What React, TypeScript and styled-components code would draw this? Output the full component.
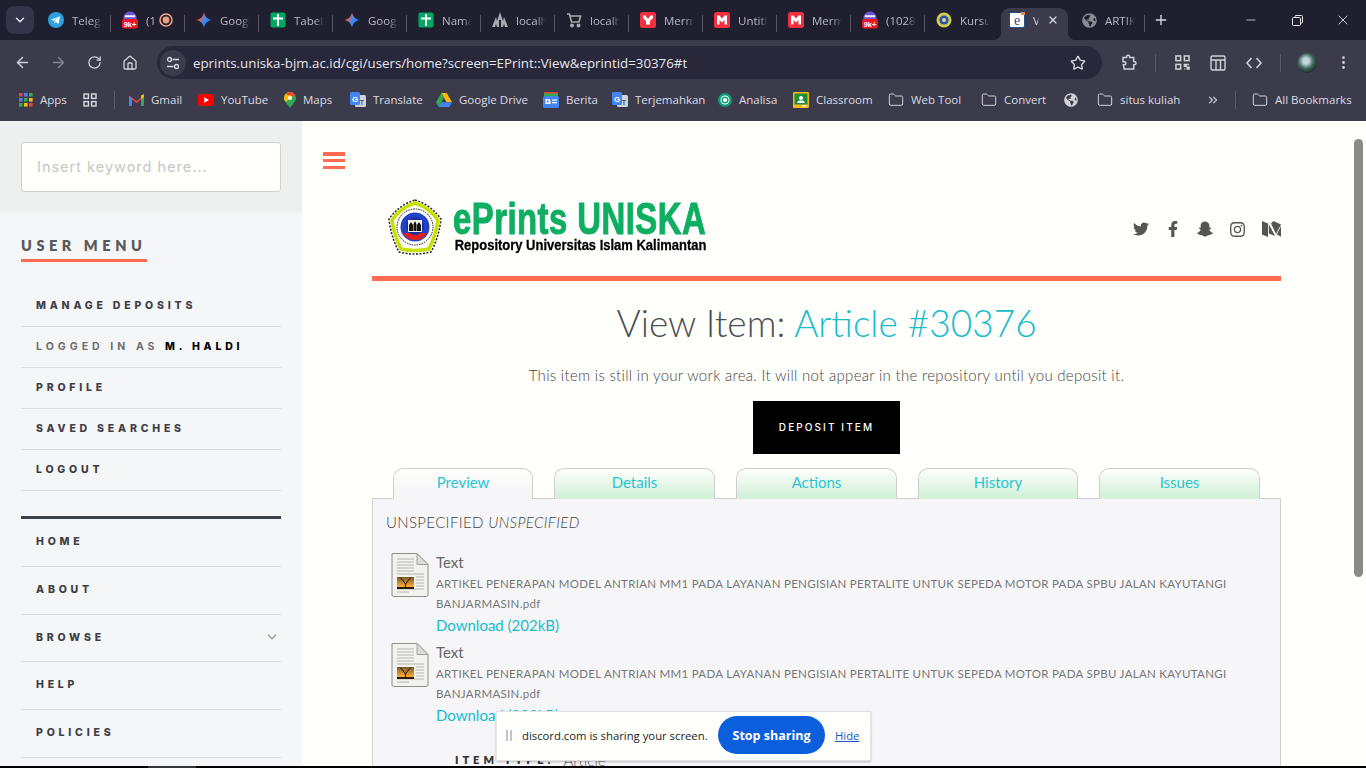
import React from "react";
import styled, { createGlobalStyle } from "styled-components";
import { ArrowLeft, ArrowRight, RotateCw, Home, Star, Folder, ChevronDown, ChevronsRight, X, Plus, Minus, MoreVertical } from "lucide-react";
import { FaTwitter, FaFacebookF, FaSnapchatGhost, FaInstagram, FaGlobeAmericas } from "react-icons/fa";

const GlobalStyle = createGlobalStyle`
  html, body { margin: 0; padding: 0; height: 100%; overflow: hidden; background: #000; }
  * { box-sizing: border-box; }
`;

const Screen = styled.div`
  width: 1366px;
  height: 768px;
  display: flex;
  flex-direction: column;
  overflow: hidden;
  position: relative;
  font-family: Lato, "Liberation Sans", sans-serif;
`;

/* browser chrome */
const TabStrip = styled.div`
  height: 40px;
  flex: none;
  background: #1f1f2f;
  display: flex;
  align-items: flex-end;
  padding-left: 6px;
  font-family: "Open Sans", "Noto Sans", sans-serif;
`;
const TabSearch = styled.div`
  width: 28px;
  height: 28px;
  margin: 0 3px 6px 0;
  border-radius: 8px;
  background: #34344a;
  color: #e6e6ee;
  display: flex;
  align-items: center;
  justify-content: center;
`;
const BrowserTab = styled.div<{ $w?: number; $plain?: boolean }>`
  width: ${(p) => p.$w ?? 74}px;
  height: 32px;
  display: flex;
  align-items: center;
  padding: 0 0 8px 11px;
  position: relative;
  color: #b9b9c4;
  font-size: 11.5px;
  white-space: nowrap;
  overflow: hidden;
  &::after {
    content: "";
    display: ${(p) => (p.$plain ? "none" : "block")};
    position: absolute;
    right: 0;
    top: 7px;
    width: 1px;
    height: 17px;
    background: #55556a;
  }
`;
const ActiveTab = styled.div`
  width: 67px;
  height: 32px;
  margin: 0 2px 0 2px;
  background: #3b3b4b;
  border-radius: 9px 9px 0 0;
  display: flex;
  align-items: center;
  padding: 0 0 8px 8px;
  color: #d8d8e2;
  font-size: 11.5px;
  gap: 8px;
  position: relative;
  &::before, &::after {
    content: "";
    position: absolute;
    bottom: 0;
    width: 8px;
    height: 8px;
  }
  &::before { left: -8px; background: radial-gradient(circle at 0 0, transparent 8px, #3b3b4b 8.5px); }
  &::after { right: -8px; background: radial-gradient(circle at 100% 0, transparent 8px, #3b3b4b 8.5px); }
`;
const Favicon = styled.span`
  width: 16px;
  height: 16px;
  flex: none;
  margin-right: 8px;
  display: flex;
  align-items: center;
  justify-content: center;
`;
const TabLabel = styled.span<{ $w?: number }>`
  width: ${(p) => p.$w ?? 30}px;
  overflow: hidden;
  -webkit-mask-image: linear-gradient(90deg, #000 70%, transparent);
  mask-image: linear-gradient(90deg, #000 70%, transparent);
`;
const PlusButton = styled.div`
  width: 32px;
  height: 32px;
  padding-bottom: 8px;
  color: #d8d8e2;
  display: flex;
  align-items: center;
  justify-content: center;
`;
const WindowControls = styled.div`
  margin-left: auto;
  height: 40px;
  display: flex;
  color: #e8e8ee;
`;
const WindowButton = styled.div`
  width: 46px;
  display: flex;
  align-items: center;
  justify-content: center;
`;

const Toolbar = styled.div`
  height: 40px;
  flex: none;
  background: #3b3b4b;
  display: flex;
  align-items: center;
  padding: 5px 0 0 4px;
  color: #d2d2da;
  font-family: "Open Sans", "Noto Sans", sans-serif;
`;
const NavButton = styled.div<{ $dim?: boolean }>`
  width: 36px;
  height: 32px;
  flex: none;
  display: flex;
  align-items: center;
  justify-content: center;
  color: ${(p) => (p.$dim ? "#85858f" : "#d2d2da")};
`;
const UrlBar = styled.div`
  width: 945px;
  height: 33px;
  margin: 0 9px 0 9px;
  background: #28283a;
  border-radius: 17px;
  display: flex;
  align-items: center;
  padding: 0 16px 0 3px;
  flex: none;
`;
const SiteInfo = styled.div`
  width: 26px;
  height: 26px;
  border-radius: 50%;
  background: #3b3b4b;
  margin-right: 7px;
  display: flex;
  align-items: center;
  justify-content: center;
`;
const UrlText = styled.span`
  font-size: 13.3px;
  color: #e6e6ee;
  flex: 1;
`;
const ToolSep = styled.div`
  width: 1px;
  height: 18px;
  background: #5a5a6c;
  flex: none;
`;
const ToolDivider = styled(ToolSep)`
  margin: 0 8px;
`;
const ToolIcons = styled.div`
  display: flex;
  align-items: center;
  flex: 1;
`;
const Avatar = styled.div`
  width: 20px;
  height: 20px;
  border-radius: 50%;
  background: radial-gradient(circle at 45% 40%, #c4d6dc 0 18%, #3f6a5d 45%, #1e2a26 75%);
`;

const Bookmarks = styled.div`
  height: 41px;
  flex: none;
  background: #3b3b4b;
  display: flex;
  align-items: center;
  padding: 0 0 2px 19px;
  color: #dcdce4;
  font-size: 11.5px;
  font-family: "Open Sans", "Noto Sans", sans-serif;
`;
const Bookmark = styled.div<{ $w: number }>`
  width: ${(p) => p.$w}px;
  flex: none;
  display: flex;
  align-items: center;
  gap: 7px;
  white-space: nowrap;
  & > svg { flex: none; }
`;

/* page */
const PageArea = styled.div`
  flex: 1;
  min-height: 0;
  display: flex;
  background: #fffffc;
  overflow: hidden;
`;
const Sidebar = styled.aside`
  width: 302px;
  flex: none;
  background: #f5f6f8;
`;
const SearchBlock = styled.div`
  height: 92px;
  padding: 21px;
  background: #eef0f0;
`;
const SearchInput = styled.div`
  height: 50px;
  border: 1px solid #cfd2d2;
  border-radius: 3px;
  background: #fffffc;
  padding: 0 0 1px 15px;
  display: flex;
  align-items: center;
  font-family: Inter, sans-serif;
  font-size: 14.5px;
  letter-spacing: 1px;
  color: #c6c6c6;
`;
const SideBody = styled.div`
  padding: 22px 21px 0;
`;
const MenuTitle = styled.div`
  display: inline-block;
  font-size: 14.5px;
  font-weight: 800;
  letter-spacing: 4.55px;
  line-height: 20px;
  color: #5a5a5a;
  padding-bottom: 3px;
  width: 126px;
  white-space: nowrap;
  border-bottom: 3px solid #ff6a50;
`;
const UserMenu = styled.div`
  margin-top: 24px;
  padding-bottom: 25px;
`;
const SideRow = styled.div<{ $h: number }>`
  height: ${(p) => p.$h}px;
  padding: 0 0 2px 15px;
  border-bottom: 1px solid #dcdfdf;
  display: flex;
  align-items: center;
  justify-content: space-between;
  font-family: Inter, sans-serif;
  font-size: 10.5px;
  font-weight: 800;
  letter-spacing: 3.8px;
  color: #3e3e48;
  white-space: nowrap;
`;
const Muted = styled.span`
  color: #6e6e70;
  font-weight: 700;
  letter-spacing: 4.05px;
`;
const Strong = styled.strong`
  color: #000;
  font-weight: 800;
`;
const MainMenu = styled.div`
  border-top: 3px solid #3a4149;
`;
const DownIcon = styled.span`
  color: #a3a6ab;
  display: flex;
  margin-right: 2px;
`;

const Main = styled.main`
  flex: 1;
  min-width: 0;
`;
const Burger = styled.div`
  margin: 31px 0 0 21px;
  width: 22px;
  height: 17px;
  display: flex;
  flex-direction: column;
  justify-content: space-between;
  span {
    height: 3.5px;
    background: #ff6a50;
  }
`;
const Content = styled.div`
  margin: 30px 0 0 70px;
  width: 909px;
`;
const SiteHeader = styled.header`
  height: 82px;
  display: flex;
  justify-content: space-between;
  padding: 0 0 21px 15px;
  border-bottom: 5px solid #ff6a50;
`;
const Logo = styled.div`
  display: flex;
  gap: 10px;
`;
const LogoText = styled.div`
  padding-top: 2px;
  width: 256px;
`;
const LogoTitle = styled.div`
  font-family: "Liberation Sans", sans-serif;
  font-weight: 700;
  font-size: 44px;
  line-height: 36px;
  color: #0fae63;
  white-space: nowrap;
  transform: scale(0.748, 1);
  transform-origin: 0 50%;
  width: 345px;
  letter-spacing: 0.6px;
  -webkit-text-stroke: 1px #0fae63;
`;
const LogoSub = styled.div`
  font-family: "Liberation Sans", sans-serif;
  font-weight: 700;
  font-size: 15px;
  line-height: 16px;
  color: #000;
  white-space: nowrap;
  padding-left: 2px;
  transform: scale(0.865, 1);
  transform-origin: 0 50%;
  width: 300px;
  -webkit-text-stroke: 0.3px #000;
`;
const Socials = styled.div`
  display: flex;
  align-items: center;
  gap: 16px;
  padding-top: 4px;
  color: #555;
`;
const Heading = styled.h1`
  margin: 20px 0 0;
  text-align: center;
  font-weight: 300;
  font-size: 37px;
  line-height: 44px;
  color: #4a4f54;
  span { color: #17bccc; }
`;
const Note = styled.p`
  margin: 20px 0 0;
  text-align: center;
  font-size: 15px;
  line-height: 20px;
  font-weight: 300;
  letter-spacing: 0.3px;
  color: #444;
`;
const DepositButton = styled.div`
  margin: 16px auto 0;
  width: 147px;
  height: 53px;
  padding-bottom: 2px;
  background: #000;
  color: #fff;
  display: flex;
  align-items: center;
  justify-content: center;
  font-family: Inter, sans-serif;
  font-size: 10px;
  font-weight: 500;
  letter-spacing: 2.1px;
`;
const Tabs = styled.div`
  margin-top: 14px;
  padding-left: 21px;
  display: flex;
  gap: 21px;
  height: 30px;
`;
const PageTab = styled.div<{ $w: number; $active?: boolean }>`
  width: ${(p) => p.$w}px;
  height: 31px;
  position: relative;
  border: 1px solid #cfcfcf;
  border-bottom: none;
  border-radius: 10px 10px 0 0;
  background: linear-gradient(180deg, #fffffc, ${(p) => (p.$active ? "#f6f6f8" : "#d3f0da")} ${(p) => (p.$active ? "70%" : "90%")});
  color: #2cc4d2;
  font-size: 15px;
  font-weight: 400;
  display: flex;
  justify-content: center;
  padding-top: 3px;
  line-height: 20px;
`;
const Panel = styled.section`
  border: 1px solid #cfcfcf;
  background: #f6f6f8;
  padding: 13px 13px 0;
  height: 400px;
  color: #555;
`;
const Unspecified = styled.div`
  font-size: 15px;
  line-height: 20px;
  font-weight: 300;
  letter-spacing: 0.35px;
  color: #444;
`;
const FileRow = styled.div`
  margin-top: 20px;
  padding: 0 0 7px 5px;
  display: flex;
  & + & { margin-top: 0; }
`;
const FileThumb = styled.div`
  width: 45px;
  flex: none;
`;
const FileInfo = styled.div`
  flex: 1;
`;
const FileKind = styled.div`
  font-size: 15px;
  line-height: 20px;
  font-weight: 400;
  color: #666;
`;
const FileName = styled.div`
  margin-top: 2px;
  font-size: 11.5px;
  line-height: 20px;
  letter-spacing: 0.3px;
  color: #777;
`;
const Download = styled.div`
  margin-top: 1px;
  font-size: 15px;
  line-height: 20px;
  color: #17bccc;
`;
const MetaRow = styled.div`
  margin-top: 18px;
  padding-left: 69px;
  display: flex;
  align-items: center;
  gap: 9px;
  line-height: 20px;
`;
const MetaLabel = styled.span`
  font-size: 11px;
  font-weight: 800;
  letter-spacing: 4px;
  color: #333;
`;
const MetaValue = styled.span`
  font-size: 15px;
  font-weight: 300;
`;

/* overlays */
const ScrollThumb = styled.div`
  position: absolute;
  left: 1354px;
  top: 139px;
  width: 9px;
  height: 438px;
  border-radius: 5px;
  background: #8a8a88;
`;
const ShareBar = styled.div`
  position: absolute;
  left: 496px;
  top: 711px;
  width: 375px;
  height: 50px;
  padding: 0 0 2px 9px;
  background: #fffffc;
  border: 1px solid #e3e3e3;
  box-shadow: 0 1px 2px rgba(0, 0, 0, 0.25);
  display: flex;
  align-items: center;
  font-family: "Open Sans", "Noto Sans", sans-serif;
  font-size: 11.3px;
  color: #222;
`;
const Grip = styled.div`
  width: 6px;
  height: 11px;
  border-left: 2px solid #c4c4c4;
  border-right: 2px solid #c4c4c4;
  margin-right: 10px;
`;
const ShareText = styled.span`
  width: 185px;
  white-space: nowrap;
`;
const StopButton = styled.div`
  width: 107px;
  height: 38px;
  margin: 0 10px 0 11px;
  border-radius: 19px;
  background: #0b5fdc;
  color: #fff;
  font-size: 12.5px;
  font-weight: 700;
  display: flex;
  align-items: center;
  justify-content: center;
`;
const HideLink = styled.span`
  color: #1a56cc;
  text-decoration: underline;
`;
const BottomEdge = styled.div`
  height: 2px;
  flex: none;
  background: linear-gradient(90deg, #000 148px, #333 148px, #333 196px, #000 196px);
`;

/* drawings */
const Telegram = () => (
  <svg width="16" height="16" viewBox="0 0 16 16">
    <circle cx="8" cy="8" r="8" fill="#2aa3e0" />
    <path d="M3 7.800 12 4.200 10.600 12 7.800 10 6.500 11.400 6.200 9.200 10.400 5.800 5.200 8.800z" fill="#fff" />
  </svg>
);
const Sheet = ({ color }: { color: string }) => (
  <svg width="16" height="16" viewBox="0 0 16 16">
    <rect x="0.5" y="0.5" width="15" height="15" rx="2" fill={color} />
    <path d="M7 2h2v3.500h4v2H9V14H7V7.500H3v-2h4z" fill="#fff" />
  </svg>
);
const Gemini = () => (
  <svg width="16" height="16" viewBox="0 0 16 16">
    <defs>
      <linearGradient id="gem" x1="0" y1="0" x2="1" y2="0.6">
        <stop offset="0" stopColor="#f5b400" />
        <stop offset="0.35" stopColor="#ea5a3c" />
        <stop offset="0.6" stopColor="#3f8cf3" />
        <stop offset="1" stopColor="#2a6ff0" />
      </linearGradient>
    </defs>
    <path d="M8 0c.6 4.400 3.400 7.400 8 8-4.600.6-7.400 3.600-8 8-.6-4.400-3.400-7.400-8-8 4.600-.6 7.400-3.600 8-8z" fill="url(#gem)" />
  </svg>
);
const Badge = () => (
  <svg width="17" height="18" viewBox="0 0 17 18">
    <circle cx="8.500" cy="7" r="7" fill="#6a55d8" />
    <rect x="3" y="4" width="11" height="2" fill="#fff" />
    <rect x="0" y="8" width="17" height="10" rx="2" fill="#f0141e" />
    <text x="8.500" y="16" textAnchor="middle" fontSize="8" fontWeight="700" fill="#fff" fontFamily="Liberation Sans">9k+</text>
  </svg>
);
const Ring = () => (
  <svg width="14" height="14" viewBox="0 0 14 14">
    <circle cx="7" cy="7" r="6" fill="none" stroke="#f5a58c" strokeWidth="1.500" />
    <circle cx="7" cy="7" r="3.400" fill="#f0a080" />
  </svg>
);
const Tower = () => (
  <svg width="16" height="16" viewBox="0 0 16 16" fill="#a9a9b0">
    <path d="M0 15 4 5l1 4 3-9 3 9 1-4 4 10h-3l-1-3-1 3H9V8H7v7H5l-1-3-1 3z" />
  </svg>
);
const Cart = () => (
  <svg width="16" height="16" viewBox="0 0 16 16" fill="none" stroke="#a9a9b0" strokeWidth="1.600">
    <path d="M1 2h2.500l2 8h7.500l1.500-6H4.200" />
    <circle cx="6" cy="13.500" r="1.200" fill="#a9a9b0" />
    <circle cx="12.500" cy="13.500" r="1.200" fill="#a9a9b0" />
  </svg>
);
const Maker = ({ wide }: { wide?: boolean }) => (
  <svg width="16" height="16" viewBox="0 0 16 16">
    <rect width="16" height="16" rx="2.500" fill="#f0303f" />
    {wide ? (
      <path d="M3 3.500h2.500L8 6.500l2.500-3H13v9h-2.500V8L8 10.500 5.500 8v4.500H3z" fill="#fff" />
    ) : (
      <path d="M3 3.500h2.400L8 7l2.600-3.500H13V6l-3 3v3.500H6V9L3 6z" fill="#fff" />
    )}
  </svg>
);
const SealSmall = () => (
  <svg width="16" height="16" viewBox="0 0 16 16">
    <circle cx="8" cy="8" r="7.500" fill="#c8d050" />
    <circle cx="8" cy="8" r="4.600" fill="#3050a8" />
    <circle cx="8" cy="8" r="2" fill="#d8d8b0" />
  </svg>
);
const EprintsFav = () => (
  <svg width="16" height="16" viewBox="0 0 16 16">
    <rect x="0.5" y="0.5" width="15" height="15" rx="1.500" fill="#fff" stroke="#1d4f8c" />
    <text x="8" y="13" textAnchor="middle" fontSize="14" fontFamily="Liberation Serif" fill="#1d4f8c">e</text>
    <rect x="12" y="0" width="4" height="3" fill="#f08a30" />
  </svg>
);
const Restore = () => (
  <svg width="11" height="11" viewBox="0 0 11 11" fill="none" stroke="currentColor">
    <rect x="0.5" y="2.500" width="8" height="8" rx="1" />
    <path d="M3 2.500V1.500a1 1 0 0 1 1-1h5.500a1 1 0 0 1 1 1V7a1 1 0 0 1-1 1h-1" />
  </svg>
);
const Tune = () => (
  <svg width="14" height="14" viewBox="0 0 14 14" fill="none" stroke="#d8d8e0" strokeWidth="1.300">
    <circle cx="3.500" cy="3.500" r="2" />
    <path d="M6.500 3.500H13M1 10.500h6.500" />
    <circle cx="10.500" cy="10.500" r="2" />
  </svg>
);
const Extension = () => (
  <svg width="18" height="18" viewBox="0 0 18 18" fill="none" stroke="#d2d2da" strokeWidth="1.500">
    <path d="M3 3.500h3.500V2.800a1.600 1.600 0 0 1 3.200 0v.7h4v4h.7a1.600 1.600 0 0 1 0 3.200h-.7V15H4.200l-.8-4.200h1a1.500 1.500 0 0 0 0-3H3z" />
  </svg>
);
const QrIcon = () => (
  <svg width="15" height="15" viewBox="0 0 16 16" fill="none" stroke="#d2d2da" strokeWidth="1.600">
    <rect x="1" y="1" width="5" height="5" />
    <rect x="10" y="1" width="5" height="5" />
    <rect x="1" y="10" width="5" height="5" />
    <path d="M10 10h2v2h-2zM13 13h2v2h-2zM13 10h2M10 15h1" />
  </svg>
);
const Layout = () => (
  <svg width="16" height="16" viewBox="0 0 16 16" fill="none" stroke="#d2d2da" strokeWidth="1.400">
    <rect x="1" y="1" width="14" height="14" rx="1.500" />
    <path d="M1 5h14M6 5v10M10.500 5v10" />
  </svg>
);
const CodeIcon = () => (
  <svg width="16" height="12" viewBox="0 0 16 12" fill="none" stroke="#d2d2da" strokeWidth="1.600">
    <path d="M5.500 1 1 6l4.500 5M10.500 1 15 6l-4.500 5" />
  </svg>
);
const AppsGrid = () => (
  <svg width="14" height="14" viewBox="0 0 14 14">
    {[0, 5, 10].map((y, r) =>
      [0, 5, 10].map((x, c) => (
        <rect key={`${r}${c}`} x={x} y={y} width="3.600" height="3.600" fill={["#ea4335", "#4285f4", "#34a853", "#fbbc05"][(r + c) % 4]} />
      ))
    )}
  </svg>
);
const Squares = () => (
  <svg width="14" height="14" viewBox="0 0 14 14" fill="none" stroke="#dcdce4" strokeWidth="1.400">
    <rect x="1" y="1" width="4.400" height="4.400" />
    <rect x="8.600" y="1" width="4.400" height="4.400" />
    <rect x="1" y="8.600" width="4.400" height="4.400" />
    <rect x="8.600" y="8.600" width="4.400" height="4.400" />
  </svg>
);
const Gmail = () => (
  <svg width="15" height="12" viewBox="0 0 15 12">
    <path d="M0 1.500 7.500 7 15 1.500V12h-3V5.500L7.500 9 3 5.500V12H0z" fill="#ea4335" />
    <path d="M0 2v10h3V4z" fill="#4285f4" />
    <path d="M15 2v10h-3V4z" fill="#34a853" />
    <path d="M12 1.500 15 0v3l-3 2.200z" fill="#fbbc05" />
  </svg>
);
const Youtube = () => (
  <svg width="16" height="12" viewBox="0 0 16 12">
    <rect width="16" height="12" rx="3" fill="#f00" />
    <path d="M6.300 3.200 11 6l-4.700 2.800z" fill="#fff" />
  </svg>
);
const MapsPin = () => (
  <svg width="12" height="16" viewBox="0 0 12 16">
    <path d="M6 0a6 6 0 0 1 6 6c0 3.500-3.600 6-6 10C3.600 12 0 9.500 0 6a6 6 0 0 1 6-6z" fill="#34a853" />
    <path d="M6 0a6 6 0 0 1 5 2.700L1.500 10C.6 8.800 0 7.500 0 6a6 6 0 0 1 6-6z" fill="#fbbc05" />
    <path d="M6 0a6 6 0 0 1 5 2.700L8.500 5A3 3 0 0 0 4 3.500L2 1.500A6 6 0 0 1 6 0z" fill="#ea4335" />
    <circle cx="6" cy="6" r="2" fill="#fff" />
  </svg>
);
const Translate = () => (
  <svg width="16" height="16" viewBox="0 0 16 16">
    <rect x="5" y="3" width="11" height="12" rx="1.500" fill="#cfd2d8" />
    <rect x="0" y="0" width="10" height="13" rx="1.500" fill="#4285f4" />
    <text x="5" y="9.500" textAnchor="middle" fontSize="8" fontWeight="700" fill="#fff" fontFamily="Liberation Sans">G</text>
    <text x="12" y="12.500" textAnchor="middle" fontSize="7" fontWeight="700" fill="#555" fontFamily="Liberation Sans">T</text>
  </svg>
);
const Drive = () => (
  <svg width="16" height="14" viewBox="0 0 16 14">
    <path d="M5.300 0h5.400L16 9.300h-5.400z" fill="#fbbc05" />
    <path d="M5.300 0 0 9.300 2.700 14l5.300-9.300z" fill="#34a853" />
    <path d="M2.700 14h10.600L16 9.300H5.400z" fill="#4285f4" />
  </svg>
);
const News = () => (
  <svg width="16" height="16" viewBox="0 0 16 16">
    <rect x="1" y="0" width="14" height="4" rx="1" fill="#ea4335" />
    <rect x="1" y="1.500" width="14" height="3" fill="#34a853" />
    <rect x="0" y="4" width="16" height="12" rx="1.500" fill="#4285f4" />
    <path d="M2.500 7h4.500v1.200H4v2.300h2v-1H5v-1h2.500V12h-5zM9 7.500h5v1.200H9zM9 10h5v1.200H9z" fill="#fff" />
  </svg>
);
const Analisa = () => (
  <svg width="14" height="14" viewBox="0 0 14 14">
    <circle cx="7" cy="7" r="7" fill="#0f9d78" />
    <circle cx="7" cy="7" r="4.500" fill="#fff" />
    <circle cx="7" cy="7" r="2.800" fill="none" stroke="#0f9d78" strokeWidth="1.500" />
  </svg>
);
const Classroom = () => (
  <svg width="16" height="16" viewBox="0 0 16 16">
    <rect width="16" height="16" rx="1" fill="#f5bb12" />
    <rect x="1.500" y="1.500" width="13" height="11" fill="#1e8e3e" />
    <circle cx="8" cy="6" r="2" fill="#fff" />
    <path d="M4 11c.5-2 2-2.500 4-2.500s3.500.5 4 2.500z" fill="#fff" />
    <rect x="9" y="13.200" width="4.500" height="1.300" fill="#fff" />
  </svg>
);
const Seal = () => (
  <svg width="56" height="56" viewBox="0 0 56 56">
    <path d="M28 1Q44 6 54 20 52 38 44 53 28 57 12 53 4 38 2 20 12 6 28 1z" fill="#fffffc" stroke="#222" strokeWidth="1.500" strokeDasharray="2 1.500" />
    <path d="M28 4Q43 9 51 21 49 36 42 50 28 53 14 50 7 36 5 21 13 9 28 4z" fill="none" stroke="#c7e000" strokeWidth="3.500" />
    <circle cx="28" cy="28" r="18" fill="#fffffc" stroke="#111" strokeWidth="1" strokeDasharray="1.500 1" />
    <circle cx="28" cy="28" r="14.500" fill="#2340c8" />
    <path d="M16 34a13.500 13.500 0 0 0 24 0z" fill="#e02020" />
    <circle cx="28" cy="27" r="9" fill="#1a2f9a" />
    <rect x="21" y="21" width="14" height="12" fill="#f5f5f0" />
    <path d="M22 32v-6l2-3 2 3v6zM26.500 32v-7l1.500-3 1.500 3v7zM30 32v-6l2-3 2 3v6z" fill="#111" />
  </svg>
);
const MediumMark = () => (
  <svg width="19" height="16" viewBox="0 0 19 16" fill="#555">
    <path d="M0 0 6 2.600V16L0 13.500z" />
    <path d="M6.800 3 13 15l-6.200-2.600z" />
    <path d="M9 2.500 11.500 0 19 3.500 14 13z" />
    <path d="M14.800 13.500 19 5v10.800z" />
  </svg>
);
const DocThumb = () => (
  <svg width="38" height="46" viewBox="0 0 38 46">
    <defs>
      <linearGradient id="sun" x1="0" y1="0" x2="0" y2="1">
        <stop offset="0" stopColor="#7a5a2a" />
        <stop offset="0.7" stopColor="#f0a030" />
        <stop offset="1" stopColor="#f8d050" />
      </linearGradient>
    </defs>
    <path d="M1 1.500h25l11 11V43a1.500 1.500 0 0 1-1.500 1.500h-33A1.500 1.500 0 0 1 1 43z" fill="#f2f2ee" stroke="#8e8e8a" />
    <path d="M26 1.500V12.500h11z" fill="#dcdcd8" stroke="#a0a0a0" />
    <path d="M6 7h17M6 10h17M6 13h17M6 16h17M6 19h17M6 22h27M25 25h8M25 28h8M25 31h8M25 34h8M6 37h27M6 40h12" stroke="#b4b4b0" />
    <rect x="6" y="25" width="17" height="12" fill="url(#sun)" />
    <path d="M14.500 37v-5l-3-4M14.500 32l3-4M9 25.500l2.500 2.500M20 25.500 17.500 28" stroke="#111" fill="none" />
    <rect x="6" y="35" width="17" height="2" fill="#2a1a08" />
  </svg>
);

const topTabs: { icon: React.ReactNode; label: string }[] = [
  { icon: <Telegram />, label: "Telegram" },
  { icon: <Badge />, label: "(1" },
  { icon: <Gemini />, label: "Google" },
  { icon: <Sheet color="#00a862" />, label: "Tabel" },
  { icon: <Gemini />, label: "Google" },
  { icon: <Sheet color="#00a862" />, label: "Nama" },
  { icon: <Tower />, label: "localhost" },
  { icon: <Cart />, label: "localhost" },
  { icon: <Maker />, label: "Mermaid" },
  { icon: <Maker wide />, label: "Untitled" },
  { icon: <Maker wide />, label: "Mermaid" },
  { icon: <Badge />, label: "(1028" },
  { icon: <SealSmall />, label: "Kursus" },
];

const folder = <Folder size={16} strokeWidth={1.5} color="#d2d2da" />;
const marks: { w: number; icon: React.ReactNode; label?: string }[] = [
  { w: 64, icon: <AppsGrid />, label: "Apps" },
  { w: 31, icon: <Squares /> },
];
const marksAfter: { w: number; icon: React.ReactNode; label?: string }[] = [
  { w: 69, icon: <Gmail />, label: "Gmail" },
  { w: 86, icon: <Youtube />, label: "YouTube" },
  { w: 66, icon: <MapsPin />, label: "Maps" },
  { w: 86, icon: <Translate />, label: "Translate" },
  { w: 107, icon: <Drive />, label: "Google Drive" },
  { w: 69, icon: <News />, label: "Berita" },
  { w: 106, icon: <Translate />, label: "Terjemahkan" },
  { w: 75, icon: <Analisa />, label: "Analisa" },
  { w: 95, icon: <Classroom />, label: "Classroom" },
  { w: 93, icon: folder, label: "Web Tool" },
  { w: 83, icon: folder, label: "Convert" },
  { w: 33, icon: <FaGlobeAmericas size={14} color="#d2d2da" /> },
  { w: 109, icon: folder, label: "situs kuliah" },
];

const userRows = ["MANAGE DEPOSITS", "LOGGED", "PROFILE", "SAVED SEARCHES", "LOGOUT"];
const mainRows = ["HOME", "ABOUT", "BROWSE", "HELP", "POLICIES"];
const pageTabs = [
  { label: "Preview", w: 140, active: true },
  { label: "Details", w: 161 },
  { label: "Actions", w: 161 },
  { label: "History", w: 160 },
  { label: "Issues", w: 161 },
];

const FileEntry = () => (
  <FileRow>
    <FileThumb>
      <DocThumb />
    </FileThumb>
    <FileInfo>
      <FileKind>Text</FileKind>
      <FileName>
        ARTIKEL PENERAPAN MODEL ANTRIAN MM1 PADA LAYANAN PENGISIAN PERTALITE UNTUK SEPEDA MOTOR PADA SPBU JALAN KAYUTANGI
        <br />
        BANJARMASIN.pdf
      </FileName>
      <Download>Download (202kB)</Download>
    </FileInfo>
  </FileRow>
);

export default function App() {
  return (
    <Screen>
      <GlobalStyle />
      <TabStrip>
        <TabSearch>
          <ChevronDown size={14} strokeWidth={2.5} />
        </TabSearch>
        {topTabs.map((t, i) => (
          <BrowserTab key={i} $plain={i === 12}>
            <Favicon>{t.icon}</Favicon>
            {i === 1 ? (
              <>
                <TabLabel $w={13}>{t.label}</TabLabel>
                <Ring />
              </>
            ) : (
              <TabLabel>{t.label}</TabLabel>
            )}
          </BrowserTab>
        ))}
        <ActiveTab>
          <EprintsFav />
          <TabLabel $w={6}>V</TabLabel>
          <X size={12} strokeWidth={2.5} />
        </ActiveTab>
        <BrowserTab $w={75}>
          <Favicon>
            <FaGlobeAmericas size={15} color="#8a8a94" />
          </Favicon>
          <TabLabel>ARTIKEL</TabLabel>
        </BrowserTab>
        <PlusButton>
          <Plus size={16} strokeWidth={2} />
        </PlusButton>
        <WindowControls>
          <WindowButton>
            <Minus size={14} strokeWidth={1.3} />
          </WindowButton>
          <WindowButton>
            <Restore />
          </WindowButton>
          <WindowButton>
            <X size={16} strokeWidth={1.3} />
          </WindowButton>
        </WindowControls>
      </TabStrip>

      <Toolbar>
        <NavButton>
          <ArrowLeft size={17} />
        </NavButton>
        <NavButton $dim>
          <ArrowRight size={17} />
        </NavButton>
        <NavButton>
          <RotateCw size={15} />
        </NavButton>
        <NavButton>
          <Home size={16} />
        </NavButton>
        <UrlBar>
          <SiteInfo>
            <Tune />
          </SiteInfo>
          <UrlText>eprints.uniska-bjm.ac.id/cgi/users/home?screen=EPrint::View&amp;eprintid=30376#t</UrlText>
          <Star size={16} color="#d8d8e0" />
        </UrlBar>
        <ToolIcons>
          <NavButton>
            <Extension />
          </NavButton>
          <ToolDivider />
          <NavButton>
            <QrIcon />
          </NavButton>
          <NavButton>
            <Layout />
          </NavButton>
          <NavButton>
            <CodeIcon />
          </NavButton>
          <ToolDivider />
          <NavButton>
            <Avatar />
          </NavButton>
          <NavButton>
            <MoreVertical size={17} />
          </NavButton>
        </ToolIcons>
      </Toolbar>

      <Bookmarks>
        {marks.map((m, i) => (
          <Bookmark key={i} $w={m.w}>
            {m.icon}
            {m.label}
          </Bookmark>
        ))}
        <Bookmark $w={15}>
          <ToolSep />
        </Bookmark>
        {marksAfter.map((m, i) => (
          <Bookmark key={i} $w={m.w}>
            {m.icon}
            {m.label}
          </Bookmark>
        ))}
        <Bookmark $w={29}>
          <ChevronsRight size={14} color="#d2d2da" />
        </Bookmark>
        <Bookmark $w={17}>
          <ToolSep />
        </Bookmark>
        <Bookmark $w={100}>
          {folder}
          All Bookmarks
        </Bookmark>
      </Bookmarks>

      <PageArea>
        <Sidebar>
          <SearchBlock>
            <SearchInput>Insert keyword here...</SearchInput>
          </SearchBlock>
          <SideBody>
            <MenuTitle>USER MENU</MenuTitle>
            <UserMenu>
              {userRows.map((r) => (
                <SideRow key={r} $h={41}>
                  {r === "LOGGED" ? (
                    <span>
                      <Muted>LOGGED IN AS </Muted>
                      <Strong>M. HALDI</Strong>
                    </span>
                  ) : (
                    r
                  )}
                </SideRow>
              ))}
            </UserMenu>
            <MainMenu>
              {mainRows.map((r) => (
                <SideRow key={r} $h={r === "BROWSE" ? 47 : 48}>
                  {r}
                  {r === "BROWSE" && (
                    <DownIcon>
                      <ChevronDown size={14} strokeWidth={3} />
                    </DownIcon>
                  )}
                </SideRow>
              ))}
            </MainMenu>
          </SideBody>
        </Sidebar>

        <Main>
          <Burger>
            <span />
            <span />
            <span />
          </Burger>
          <Content>
            <SiteHeader>
              <Logo>
                <Seal />
                <LogoText>
                  <LogoTitle>ePrints UNISKA</LogoTitle>
                  <LogoSub>Repository Universitas Islam Kalimantan</LogoSub>
                </LogoText>
              </Logo>
              <Socials>
                <FaTwitter size={16} />
                <FaFacebookF size={16} />
                <FaSnapchatGhost size={16} />
                <FaInstagram size={17} />
                <MediumMark />
              </Socials>
            </SiteHeader>
            <Heading>
              View Item: <span>Article #30376</span>
            </Heading>
            <Note>This item is still in your work area. It will not appear in the repository until you deposit it.</Note>
            <DepositButton>DEPOSIT ITEM</DepositButton>
            <Tabs>
              {pageTabs.map((t) => (
                <PageTab key={t.label} $w={t.w} $active={t.active}>
                  {t.label}
                </PageTab>
              ))}
            </Tabs>
            <Panel>
              <Unspecified>
                UNSPECIFIED <em>UNSPECIFIED</em>
              </Unspecified>
              <FileEntry />
              <FileEntry />
              <MetaRow>
                <MetaLabel>ITEM TYPE:</MetaLabel>
                <MetaValue>Article</MetaValue>
              </MetaRow>
            </Panel>
          </Content>
        </Main>
      </PageArea>
      <BottomEdge />

      <ScrollThumb />
      <ShareBar>
        <Grip />
        <ShareText>discord.com is sharing your screen.</ShareText>
        <StopButton>Stop sharing</StopButton>
        <HideLink>Hide</HideLink>
      </ShareBar>
    </Screen>
  );
}
